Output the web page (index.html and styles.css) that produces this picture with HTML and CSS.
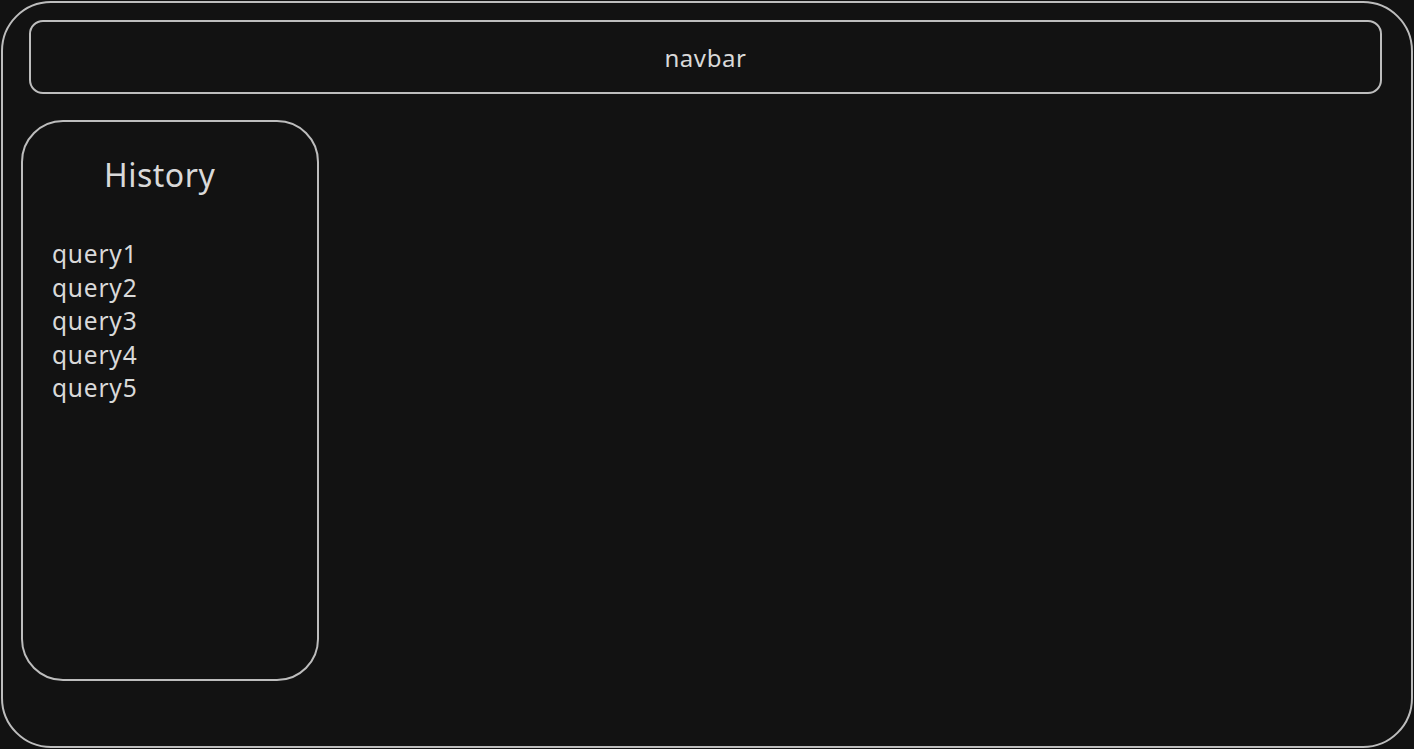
FILE: index.html
```html
<!DOCTYPE html>
<html>
<head>
<meta charset="utf-8">
<link rel="stylesheet" href="styles.css">
</head>
<body>
<div class="app">
  <div class="navbar">navbar</div>
  <aside class="history">
    <h2 class="history-title">History</h2>
    <ul class="history-list">
      <li>query1</li>
      <li>query2</li>
      <li>query3</li>
      <li>query4</li>
      <li>query5</li>
    </ul>
  </aside>
</div>
</body>
</html>
```
FILE: styles.css
```css
html, body {
  margin: 0;
  padding: 0;
  background: #121212;
}
body {
  font-family: "Noto Sans", "Lato", sans-serif;
  color: #d9d9d9;
}
.app {
  box-sizing: border-box;
  margin: 1px;
  width: 1412px;
  height: 747px;
  border: 2px solid #bdbdbd;
  border-radius: 50px;
  display: flex;
  flex-direction: column;
  align-items: flex-start;
}
.navbar {
  box-sizing: border-box;
  margin: 17px 31px 0 26px;
  width: 1353px;
  height: 74px;
  border: 2px solid #bdbdbd;
  border-radius: 14px;
  display: flex;
  align-items: center;
  justify-content: center;
  font-size: 24px;
  letter-spacing: 0.6px;
}
.history {
  box-sizing: border-box;
  margin: 26px 0 0 18px;
  width: 298px;
  height: 561px;
  border: 2px solid #bdbdbd;
  border-radius: 42px;
  padding: 33px 0 0 29px;
}
.history-title {
  margin: 0 0 0 52px;
  font-weight: 400;
  font-size: 32px;
  line-height: 40px;
  letter-spacing: 0.5px;
}
.history-list {
  list-style: none;
  margin: 42px 0 0 0;
  padding: 0;
  font-size: 24.5px;
  line-height: 33.5px;
  letter-spacing: 0.8px;
}
```
